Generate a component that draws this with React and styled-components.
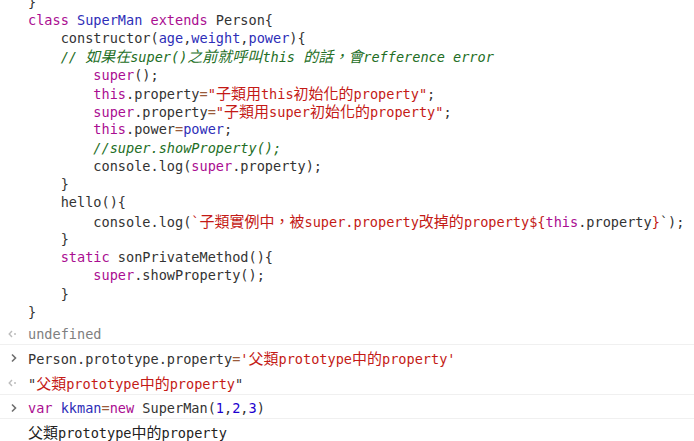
import React from "react";
import styled, { createGlobalStyle } from "styled-components";

const Global = createGlobalStyle`
  html, body { margin: 0; padding: 0; background: #fff; overflow: hidden; }
  body { width: 694px; height: 441px; }
`;

const Console = styled.div`
  font-family: "DejaVu Sans Mono", "Liberation Mono", monospace;
  font-size: 13.57px;
  color: #333;
  width: 694px;
  margin-top: -7.3px;
`;

const Group = styled.div`
  border-bottom: ${(p) => (p.$last ? "none" : "1px solid #f0f0f0")};
`;

const Row = styled.div`
  display: flex;
  align-items: flex-start;
  box-sizing: border-box;
  height: ${(p) => (p.$block ? "auto" : p.$tall ? "24.35px" : "23.2px")};
  padding-top: ${(p) => (p.$block ? "0" : "3px")};
`;

const IconCell = styled.div`
  width: 28px;
  flex: 0 0 28px;
  height: ${(p) => (p.$block ? "18.25px" : "20px")};
  display: flex;
  align-items: center;
  padding-left: ${(p) => p.$pad || 8}px;
  box-sizing: border-box;
`;

const Content = styled.div`
  white-space: pre;
  line-height: ${(p) => (p.$block ? "18.25px" : "20px")};
  color: ${(p) => p.$color || "#333"};
`;

const CodeLine = styled.div`
  padding-left: ${(p) => p.$indent * 8.17}px;
  height: 18.25px;
`;

const Cjk = styled.span`
  font-family: "Noto Sans CJK TC", "Noto Sans CJK SC", sans-serif;
  font-size: 15px;
`;

const Kw = styled.span` color: #aa0d91; `;
const Def = styled.span` color: #2e2eb8; `;
const Str = styled.span` color: #c41a16; `;
const Cm = styled.span` color: #236e25; font-style: italic; `;
const Op = styled.span` color: #9a5a3a; `;
const Num = styled.span` color: #1c00cf; `;

function T({ children }) {
  const parts = String(children).split(/([\u3000-\u303f\u4e00-\u9fff\uff00-\uffef]+)/);
  return parts.map((p, i) =>
    i % 2 === 1 ? <Cjk key={i}>{p}</Cjk> : <React.Fragment key={i}>{p}</React.Fragment>
  );
}

const InputIcon = () => (
  <svg width="8" height="10" viewBox="0 0 8 10">
    <path d="M2 1.5 L5.5 5 L2 8.5" fill="none" stroke="#6e6e6e" strokeWidth="1.6" />
  </svg>
);

const ResultIcon = () => (
  <svg width="10" height="10" viewBox="0 0 10 10">
    <path d="M4 2 L1.2 5 L4 8" fill="none" stroke="#bcbcbc" strokeWidth="1.4" />
    <circle cx="7" cy="5" r="1" fill="#bcbcbc" />
  </svg>
);

const code = [
  [0, <>{"}"}</>],
  [0, <><Kw>class</Kw> <Def>SuperMan</Def> <Kw>extends</Kw> Person{"{"}</>],
  [4, <>constructor(<Def>age</Def>,<Def>weight</Def>,<Def>power</Def>){"{"}</>],
  [4, <Cm><T>{"// 如果在super()之前就呼叫this 的話，會refference error"}</T></Cm>],
  [8, <><Kw>super</Kw>();</>],
  [8, <><Kw>this</Kw>.property<Op>=</Op><Str><T>{'"子類用this初始化的property"'}</T></Str>;</>],
  [8, <><Kw>super</Kw>.property<Op>=</Op><Str><T>{'"子類用super初始化的property"'}</T></Str>;</>],
  [8, <><Kw>this</Kw>.power<Op>=</Op><Def>power</Def>;</>],
  [8, <Cm>//super.showProperty();</Cm>],
  [8, <>console.log(<Kw>super</Kw>.property);</>],
  [4, <>{"}"}</>],
  [4, <>hello(){"{"}</>],
  [8, <>console.log(<Str><T>{"`子類實例中，被super.property改掉的property${"}</T></Str><Kw>this</Kw>.property<Str>{"}"}</Str>`);</>],
  [4, <>{"}"}</>],
  [4, <><Kw>static</Kw> sonPrivateMethod(){"{"}</>],
  [8, <><Kw>super</Kw>.showProperty();</>],
  [4, <>{"}"}</>],
  [0, <>{"}"}</>],
];

export default function App() {
  return (
    <>
      <Global />
      <Console>
        <Group>
          <Row $block>
            <IconCell $block />
            <Content $block>
              {code.map(([ind, node], i) => (
                <CodeLine key={i} $indent={ind}>{node}</CodeLine>
              ))}
            </Content>
          </Row>
          <Row>
            <IconCell><ResultIcon /></IconCell>
            <Content $color="#808080">undefined</Content>
          </Row>
        </Group>
        <Group>
          <Row $tall>
            <IconCell $pad={10}><InputIcon /></IconCell>
            <Content>
              Person.prototype.property<Op>=</Op><Str><T>{"'父類prototype中的property'"}</T></Str>
            </Content>
          </Row>
          <Row $tall>
            <IconCell><ResultIcon /></IconCell>
            <Content>
              "<Str><T>{"父類prototype中的property"}</T></Str>"
            </Content>
          </Row>
        </Group>
        <Group>
          <Row>
            <IconCell $pad={10}><InputIcon /></IconCell>
            <Content>
              <Kw>var</Kw> <Def>kkman</Def><Op>=</Op><Kw>new</Kw> SuperMan(<Num>1</Num>,<Num>2</Num>,<Num>3</Num>)
            </Content>
          </Row>
        </Group>
        <Group $last>
          <Row $tall>
            <IconCell />
            <Content $color="#222"><T>{"父類prototype中的property"}</T></Content>
          </Row>
        </Group>
      </Console>
    </>
  );
}
